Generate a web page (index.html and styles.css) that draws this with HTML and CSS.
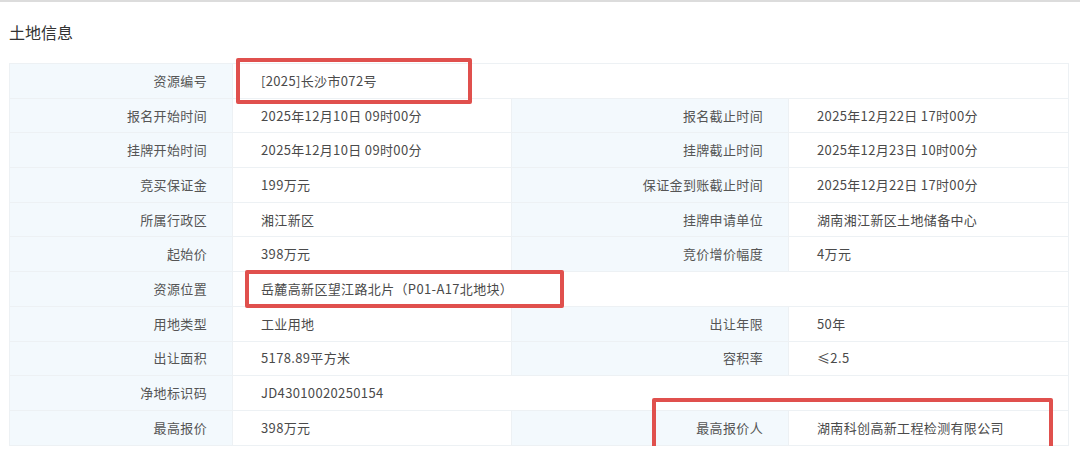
FILE: index.html
```html
<!DOCTYPE html>
<html lang="zh-CN">
<head>
<meta charset="utf-8">
<link rel="stylesheet" href="styles.css">
</head>
<body>
<div class="page">
  <h2 class="title">土地信息</h2>
  <div class="table-wrap">
    <table class="info">
      <colgroup>
        <col class="c1"><col class="c2"><col class="c3"><col class="c4">
      </colgroup>
      <tbody>
        <tr><th>资源编号</th><td colspan="3">[2025]长沙市072号</td></tr>
        <tr><th>报名开始时间</th><td>2025年12月10日 09时00分</td><th>报名截止时间</th><td>2025年12月22日 17时00分</td></tr>
        <tr><th>挂牌开始时间</th><td>2025年12月10日 09时00分</td><th>挂牌截止时间</th><td>2025年12月23日 10时00分</td></tr>
        <tr><th>竞买保证金</th><td>199万元</td><th>保证金到账截止时间</th><td>2025年12月22日 17时00分</td></tr>
        <tr><th>所属行政区</th><td>湘江新区</td><th>挂牌申请单位</th><td>湖南湘江新区土地储备中心</td></tr>
        <tr><th>起始价</th><td>398万元</td><th>竞价增价幅度</th><td>4万元</td></tr>
        <tr><th>资源位置</th><td colspan="3">岳麓高新区望江路北片（P01-A17北地块）</td></tr>
        <tr><th>用地类型</th><td>工业用地</td><th>出让年限</th><td>50年</td></tr>
        <tr><th>出让面积</th><td>5178.89平方米</td><th>容积率</th><td>≤2.5</td></tr>
        <tr><th>净地标识码</th><td colspan="3">JD43010020250154</td></tr>
        <tr><th>最高报价</th><td>398万元</td><th>最高报价人</th><td>湖南科创高新工程检测有限公司</td></tr>
      </tbody>
    </table>
    <div class="mark mark-1"></div>
    <div class="mark mark-2"></div>
    <div class="mark mark-3"></div>
  </div>
</div>
</body>
</html>
```
FILE: styles.css
```css
html, body {
  margin: 0;
  padding: 0;
  background: #ffffff;
}
body {
  font-family: "Noto Sans CJK SC", "Noto Sans", sans-serif;
  color: #4a4a4a;
  overflow: hidden;
}
.page {
  border-top: 2px solid #dcdcdc;
  padding: 0 12px 0 9px;
}
.title {
  margin: 0;
  padding: 19px 0 0;
  height: 42px;
  font-size: 16px;
  font-weight: normal;
  color: #333333;
  line-height: 22px;
}
.table-wrap {
  position: relative;
}
.info {
  width: 1059px;
  border-collapse: collapse;
  table-layout: fixed;
  font-size: 13px;
  letter-spacing: 0.35px;
}
.c1 { width: 223px; }
.c2 { width: 279px; }
.c3 { width: 277px; }
.c4 { width: 280px; }
.info th,
.info td {
  height: 33.7px;
  padding: 0;
  border: 1px solid #edf1f4;
  font-weight: normal;
  white-space: nowrap;
  line-height: 20px;
}
.info th {
  background: #f3f9fd;
  text-align: right;
  padding-right: 25px;
  color: #555555;
}
.info td {
  background: #ffffff;
  text-align: left;
  padding-left: 28px;
  color: #4a4a4a;
}
.mark {
  position: absolute;
  border: 4px solid #e0504d;
  border-radius: 2px;
  box-sizing: border-box;
}
.mark-1 { left: 227px; top: -5px; width: 236px; height: 46px; }
.mark-2 { left: 236px; top: 207px; width: 319px; height: 38px; }
.mark-3 { left: 643px; top: 335px; width: 401px; height: 60px; }
```
